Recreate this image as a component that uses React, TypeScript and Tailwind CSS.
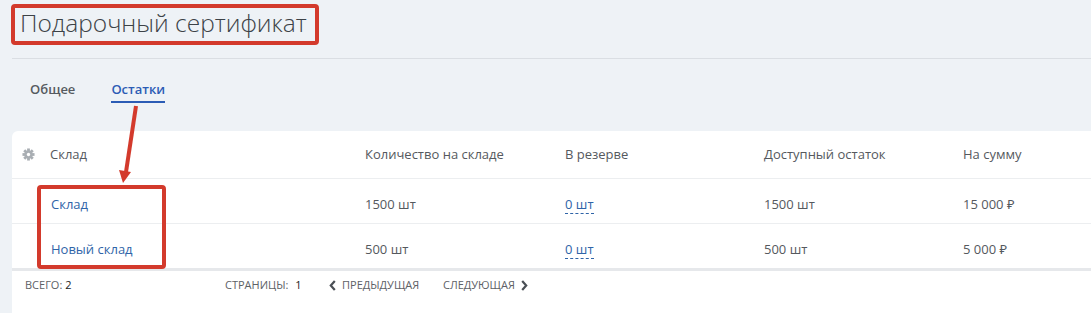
const rows = [
  { name: "Склад", qty: "1500 шт", reserve: "0 шт", free: "1500 шт", sum: "15 000 ₽" },
  { name: "Новый склад", qty: "500 шт", reserve: "0 шт", free: "500 шт", sum: "5 000 ₽" },
];

const cols = "grid grid-cols-[353px_200px_199px_199px_1fr]";

function Gear() {
  // 8 teeth gear with a hole in the middle
  const teeth = Array.from({ length: 8 }, (_, i) => i * 45);
  return (
    <svg width="13" height="13" viewBox="-7 -7 14 14" className="shrink-0">
      {teeth.map((a) => (
        <rect key={a} x="-1.5" y="-6.5" width="3" height="3" fill="#a9aeb3" transform={`rotate(${a})`} />
      ))}
      <circle r="4.3" fill="#a9aeb3" />
      <circle r="1.8" fill="#fff" />
    </svg>
  );
}

export default function App() {
  return (
    <main
      className="relative h-[313px] w-[1091px] overflow-hidden bg-[#eef2f6] text-[#4a4f55]"
      style={{ fontFamily: '"Open Sans", "Noto Sans", sans-serif' }}
    >
      <header className="pl-5 pt-[5px] h-[58px]">
        <h1 className="text-[24.5px] font-light leading-[36px] text-[#3c4247]">Подарочный сертификат</h1>
      </header>
      <div className="ml-3 border-t border-[#dadee3]" />

      {/* tabs */}
      <nav className="flex gap-9 pl-[30px] pt-[20px] h-[72px] text-[13px] font-semibold">
        <span className="text-[#555a60] leading-[20px]">Общее</span>
        <span className="text-[#2b5cb5] leading-[20px] h-[24px] border-b-2 border-[#2b5cb5]">Остатки</span>
      </nav>

      {/* table card */}
      <section className="ml-3 bg-white rounded-tl-md h-[183px] text-[13px]">
        <div className={`${cols} h-[48px] items-center border-b border-[#eceef0] text-[#55595e]`}>
          <div className="flex items-center gap-[15px] pl-[10px]">
            <Gear />
            <span>Склад</span>
          </div>
          <div>Количество на складе</div>
          <div>В резерве</div>
          <div>Доступный остаток</div>
          <div>На сумму</div>
        </div>
        {rows.map((r, i) => (
          <div
            key={r.name}
            className={`${cols} items-center pt-[8px] border-b ${
              i === rows.length - 1 ? "border-[#e6e8eb] border-b-[3px] h-[47px]" : "h-[45px] border-[#eceef0]"
            } text-[#55595e]`}
          >
            <div className="pl-[39px] text-[#2f64a8]">{r.name}</div>
            <div>{r.qty}</div>
            <div>
              <span className="text-[#2f64a8] border-b border-dashed border-[#2f64a8] leading-[17px] inline-block">
                {r.reserve}
              </span>
            </div>
            <div>{r.free}</div>
            <div>{r.sum}</div>
          </div>
        ))}
        <div className="flex items-center h-[28px] text-[11px] uppercase text-[#5d6166]">
          <div className="pl-[13px] w-[213px]">
            Всего: <span className="text-[#222]">2</span>
          </div>
          <div className="w-[104px]">
            Страницы: <span className="ml-1 text-[#222]">1</span>
          </div>
          <div className="flex items-center gap-[6px] w-[114px]">
            <svg width="7" height="11" viewBox="0 0 7 11">
              <path d="M5.8 1 L1.8 5.5 L5.8 10" fill="none" stroke="#4a4f55" strokeWidth="2.2" />
            </svg>
            <span>Предыдущая</span>
          </div>
          <div className="flex items-center gap-[6px]">
            <span>Следующая</span>
            <svg width="7" height="11" viewBox="0 0 7 11">
              <path d="M1.2 1 L5.2 5.5 L1.2 10" fill="none" stroke="#4a4f55" strokeWidth="2.2" />
            </svg>
          </div>
        </div>
      </section>

      {/* annotations */}
      <div className="pointer-events-none absolute left-[11px] top-[4px] h-[41px] w-[308px] rounded-[4px] border-4 border-[#d33a2c]" />
      <div className="pointer-events-none absolute left-[37px] top-[185px] h-[84px] w-[129px] rounded-[4px] border-4 border-[#d33a2c]" />
      <svg className="pointer-events-none absolute left-0 top-0" width="1091" height="313">
        <line x1="136" y1="106" x2="126" y2="172" stroke="#d33a2c" strokeWidth="4" />
        <polygon points="119,170 131,172 123,183" fill="#d33a2c" />
      </svg>
    </main>
  );
}
